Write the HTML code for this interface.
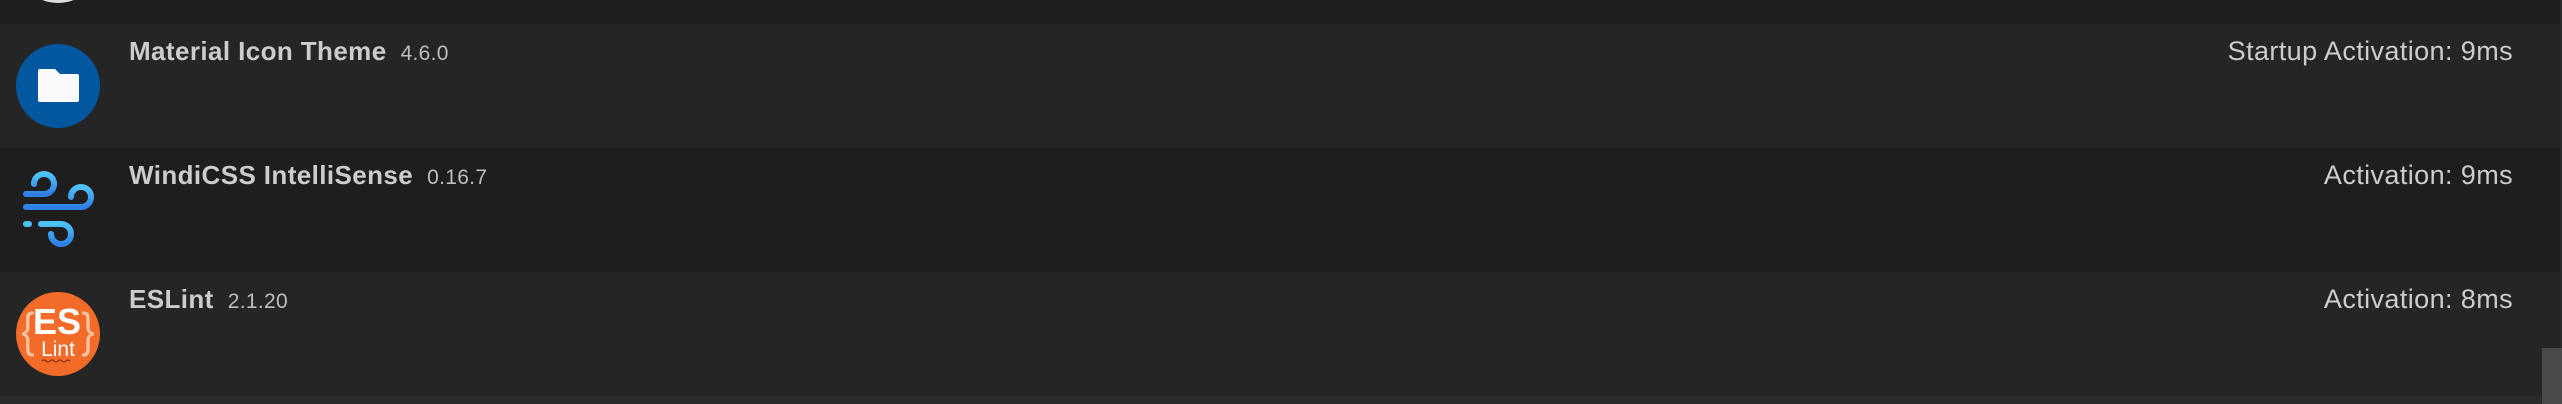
<!DOCTYPE html>
<html><head><style>
html,body{margin:0;padding:0;width:2562px;height:404px;overflow:hidden;background:#1e1e1e;font-family:"Liberation Sans",sans-serif;}
.row{position:absolute;left:0;width:2560px;height:124px;}
.r1{top:24px;background:#252525}
.r2{top:148px;background:#1e1e1e}
.r3{top:272px;background:#252525}
.t{position:absolute;left:129px;top:12px;color:#cccccc;font-weight:bold;font-size:26px;letter-spacing:0.4px;white-space:nowrap}
.t span{font-weight:normal;font-size:21px;margin-left:14px;color:#bdbdbd;letter-spacing:0.3px}
.a{position:absolute;right:47px;top:12px;color:#cccccc;font-size:27px;letter-spacing:0.4px;white-space:nowrap}
svg{position:absolute;left:0;top:0}
</style></head><body>
<svg width="120" height="24" style="top:0"><circle cx="58" cy="-40" r="43" fill="#ddd"/></svg>
<div class="row r1">
<svg width="120" height="124"><circle cx="58" cy="62" r="42" fill="#02579f"/>
<path d="M40 45h15l5 5h17a2 2 0 0 1 2 2v24a2 2 0 0 1-2 2H40a2 2 0 0 1-2-2V47a2 2 0 0 1 2-2z" fill="#fafafa"/></svg>
<div class="t">Material Icon Theme<span>4.6.0</span></div>
<div class="a">Startup Activation: 9ms</div>
</div>
<div class="row r2">
<svg width="120" height="124"><defs><linearGradient id="g" x1="0" y1="0" x2="0" y2="1"><stop offset="0" stop-color="#4fc3f7"/><stop offset="1" stop-color="#2f7fe6"/></linearGradient></defs>
<g fill="none" stroke="url(#g)" stroke-width="6" stroke-linecap="round">
<path d="M26 46h18a10 10 0 1 0-10-10"/>
<path d="M26 59h55a10 10 0 1 0-10-10"/>
<path d="M26 76h3M41 76h20a10 10 0 1 1-10 10"/>
</g></svg>
<div class="t">WindiCSS IntelliSense<span>0.16.7</span></div>
<div class="a">Activation: 9ms</div>
</div>
<div class="row r3">
<svg width="120" height="124"><circle cx="58" cy="62" r="42" fill="#f26b29"/>
<text x="57" y="62" text-anchor="middle" font-family="Liberation Sans" font-weight="bold" font-size="36" fill="#fff">ES</text>
<text x="58" y="84" text-anchor="middle" font-family="Liberation Sans" font-size="21" fill="#fff">Lint</text>
<text x="28" y="76" text-anchor="middle" font-family="Liberation Sans" font-size="40" fill="#f8c29f" transform="scale(1,1.2) translate(0,-14)">{</text>
<text x="88" y="76" text-anchor="middle" font-family="Liberation Sans" font-size="40" fill="#f8c29f" transform="scale(1,1.2) translate(0,-14)">}</text>
<path d="M42 89q2-2 4 0t4 0t4 0t4 0t4 0t4 0t4 0" stroke="#8b2a0a" stroke-width="1.2" fill="none"/>
</svg>
<div class="t">ESLint<span>2.1.20</span></div>
<div class="a">Activation: 8ms</div>
</div>
<div style="position:absolute;top:396px;left:0;width:2562px;height:8px;background:#2a2b2b"></div>
<div style="position:absolute;top:0;left:2560px;width:2px;height:404px;background:#2a2a2a"></div>
<div style="position:absolute;top:348px;left:2542px;width:20px;height:56px;background:#4a4a4a"></div>
</body></html>
